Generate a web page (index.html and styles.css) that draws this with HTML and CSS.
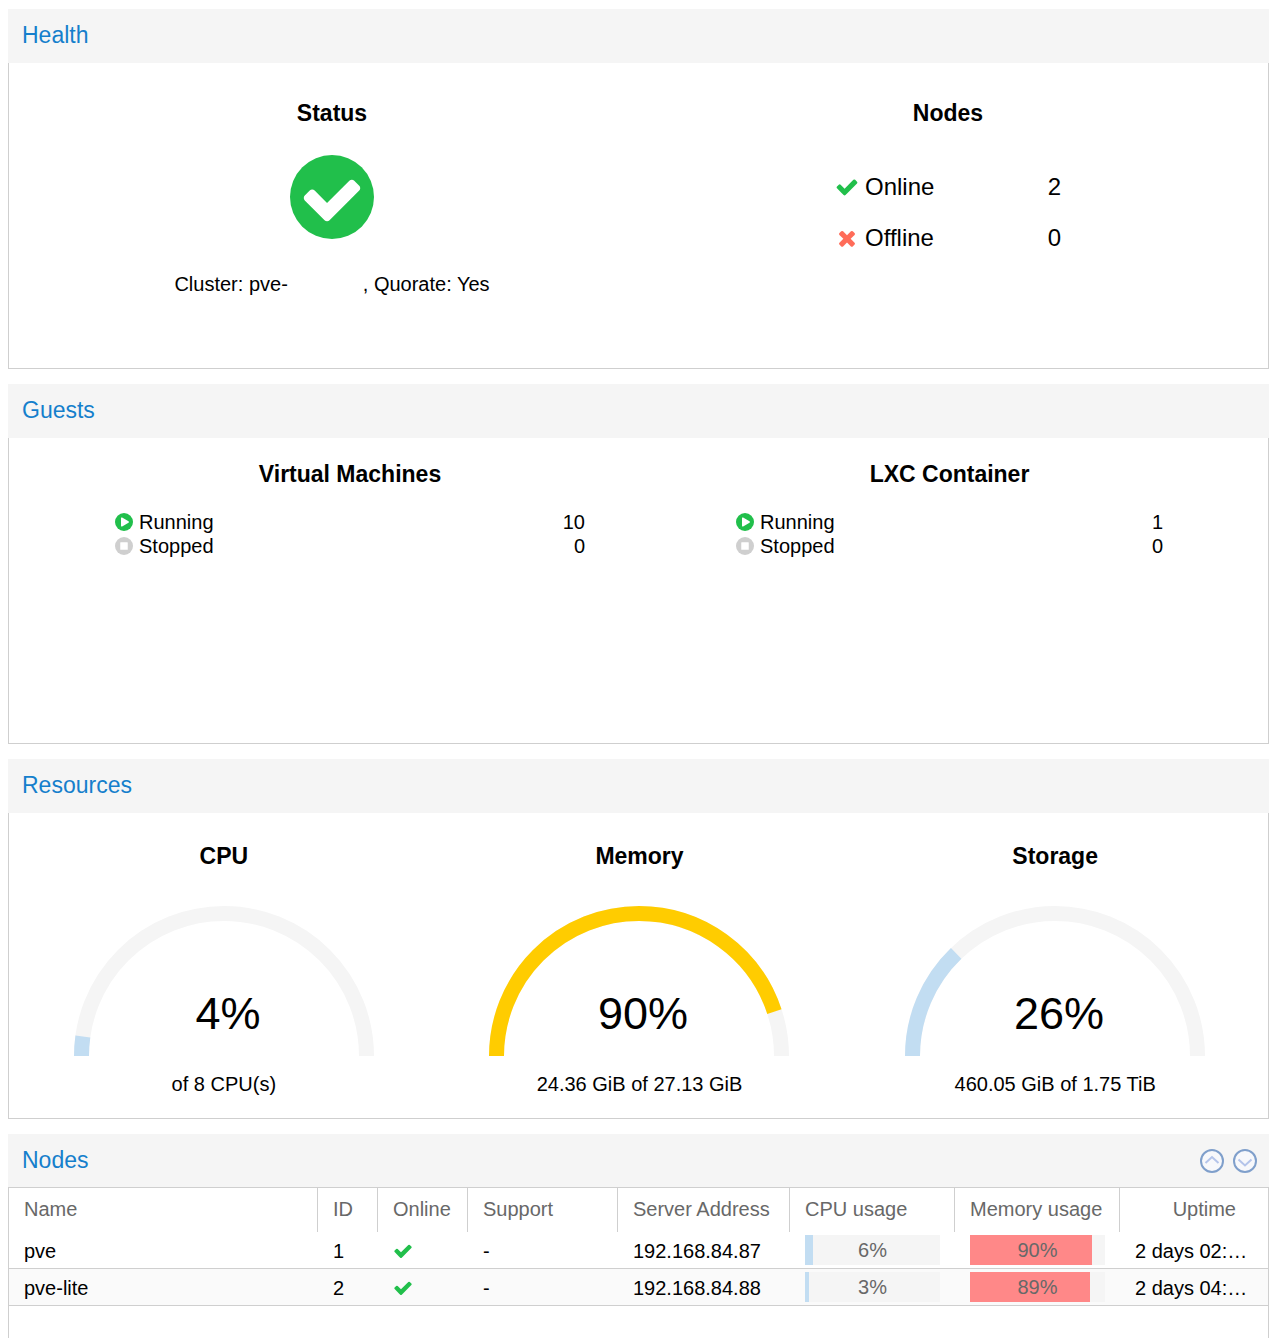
FILE: index.html
```html
<!DOCTYPE html>
<html lang="en">
<head>
<meta charset="utf-8">
<title>Datacenter Summary</title>
<link rel="stylesheet" href="styles.css">
</head>
<body>
<svg class="defs" aria-hidden="true">
  <symbol id="check" viewBox="0 0 1792 1792"><path d="M1671 566q0 40-28 68l-724 724-136 136q-28 28-68 28t-68-28l-136-136-362-362q-28-28-28-68t28-68l136-136q28-28 68-28t68 28l294 295 656-657q28-28 68-28t68 28l136 136q28 28 28 68z"/></symbol>
  <symbol id="times" viewBox="0 0 1792 1792"><path d="M1490 1322q0 40-28 68l-136 136q-28 28-68 28t-68-28l-294-294-294 294q-28 28-68 28t-68-28l-136-136q-28-28-28-68t28-68l294-294-294-294q-28-28-28-68t28-68l136-136q28-28 68-28t68 28l294 294 294-294q28-28 68-28t68 28l136 136q28 28 28 68t-28 68l-294 294 294 294q28 28 28 68z"/></symbol>
  <symbol id="check-circle" viewBox="128 128 1536 1536"><circle cx="896" cy="896" r="768"/><path fill="#fff" d="M1412 734q0-28-18-46l-91-90q-19-19-45-19t-45 19l-408 407-226-226q-19-19-45-19t-45 19l-91 90q-18 18-18 46 0 27 18 45l362 362q19 19 45 19 27 0 46-19l543-543q18-18 18-45z"/></symbol>
  <symbol id="play-circle" viewBox="128 128 1536 1536"><circle cx="896" cy="896" r="768"/><path fill="#fff" d="M1312 896q0 37-32 55l-544 320q-15 9-32 9-16 0-32-8-32-19-32-56v-640q0-37 32-56 33-18 64 1l544 320q32 18 32 55z"/></symbol>
  <symbol id="stop-circle" viewBox="128 128 1536 1536"><circle cx="896" cy="896" r="768"/><rect fill="#fff" x="576" y="576" width="640" height="640" rx="32"/></symbol>
</svg>

<section class="panel">
  <header class="panel-header"><h2>Health</h2></header>
  <div class="panel-body health">
    <div class="health-col">
      <h3>Status</h3>
      <svg class="status-icon good"><use href="#check-circle"/></svg>
      <p class="cluster">Cluster: pve-<span class="blank"></span>, Quorate: Yes</p>
    </div>
    <div class="health-col">
      <h3>Nodes</h3>
      <dl class="node-counts">
        <div><dt><svg class="icon-lg good"><use href="#check"/></svg>Online</dt><dd>2</dd></div>
        <div><dt><svg class="icon-lg bad"><use href="#times"/></svg>Offline</dt><dd>0</dd></div>
      </dl>
    </div>
  </div>
</section>

<section class="panel">
  <header class="panel-header"><h2>Guests</h2></header>
  <div class="panel-body guests">
    <div>
      <h3>Virtual Machines</h3>
      <dl class="guest-counts">
        <div><dt><svg class="icon-sm good"><use href="#play-circle"/></svg>Running</dt><dd>10</dd></div>
        <div><dt><svg class="icon-sm faded"><use href="#stop-circle"/></svg>Stopped</dt><dd>0</dd></div>
      </dl>
    </div>
    <div>
      <h3>LXC Container</h3>
      <dl class="guest-counts">
        <div><dt><svg class="icon-sm good"><use href="#play-circle"/></svg>Running</dt><dd>1</dd></div>
        <div><dt><svg class="icon-sm faded"><use href="#stop-circle"/></svg>Stopped</dt><dd>0</dd></div>
      </dl>
    </div>
  </div>
</section>

<section class="panel">
  <header class="panel-header"><h2>Resources</h2></header>
  <div class="panel-body resources">
    <div class="gauge">
      <h3>CPU</h3>
      <svg viewBox="0 0 300 150">
        <path class="track" d="M7.5 150A142.5 142.5 0 0 1 292.5 150"/>
        <path class="value" pathLength="100" stroke-dasharray="4.4 200" d="M7.5 150A142.5 142.5 0 0 1 292.5 150"/>
        <text x="154" y="123">4%</text>
      </svg>
      <p>of 8 CPU(s)</p>
    </div>
    <div class="gauge">
      <h3>Memory</h3>
      <svg viewBox="0 0 300 150">
        <path class="track" d="M7.5 150A142.5 142.5 0 0 1 292.5 150"/>
        <path class="value warning" pathLength="100" stroke-dasharray="89.9 200" d="M7.5 150A142.5 142.5 0 0 1 292.5 150"/>
        <text x="154" y="123">90%</text>
      </svg>
      <p>24.36 GiB of 27.13 GiB</p>
    </div>
    <div class="gauge">
      <h3>Storage</h3>
      <svg viewBox="0 0 300 150">
        <path class="track" d="M7.5 150A142.5 142.5 0 0 1 292.5 150"/>
        <path class="value" pathLength="100" stroke-dasharray="25.6 200" d="M7.5 150A142.5 142.5 0 0 1 292.5 150"/>
        <text x="154" y="123">26%</text>
      </svg>
      <p>460.05 GiB of 1.75 TiB</p>
    </div>
  </div>
</section>

<section class="panel panel-grid">
  <header class="panel-header">
    <h2>Nodes</h2>
    <div class="tools">
      <button type="button" aria-label="Move up"><svg viewBox="0 0 24 24"><circle cx="12" cy="12" r="11"/><path d="M5.500 14L12 8l6.500 6"/></svg></button>
      <button type="button" aria-label="Move down"><svg viewBox="0 0 24 24"><circle cx="12" cy="12" r="11"/><path d="M5.500 10.500L12 16.500l6.500-6"/></svg></button>
    </div>
  </header>
  <div class="panel-body">
    <table>
      <colgroup>
        <col><col class="w-id"><col class="w-online"><col class="w-support"><col class="w-address"><col class="w-usage"><col class="w-usage"><col class="w-uptime">
      </colgroup>
      <thead>
        <tr><th>Name</th><th>ID</th><th>Online</th><th>Support</th><th>Server Address</th><th>CPU usage</th><th>Memory usage</th><th class="uptime">Uptime</th></tr>
      </thead>
      <tbody>
        <tr>
          <td>pve</td><td>1</td><td><svg class="icon-md good"><use href="#check"/></svg></td><td>-</td><td>192.168.84.87</td>
          <td class="usage"><div class="bar"><span class="fill" style="width:6%"></span><span class="bar-text">6%</span></div></td>
          <td class="usage"><div class="bar critical"><span class="fill" style="width:90%"></span><span class="bar-text">90%</span></div></td>
          <td>2 days 02:…</td>
        </tr>
        <tr>
          <td>pve-lite</td><td>2</td><td><svg class="icon-md good"><use href="#check"/></svg></td><td>-</td><td>192.168.84.88</td>
          <td class="usage"><div class="bar"><span class="fill" style="width:3%"></span><span class="bar-text">3%</span></div></td>
          <td class="usage"><div class="bar critical"><span class="fill" style="width:89%"></span><span class="bar-text">89%</span></div></td>
          <td>2 days 04:…</td>
        </tr>
      </tbody>
    </table>
  </div>
</section>
</body>
</html>
```
FILE: styles.css
```css
* {
  box-sizing: border-box;
}

body {
  display: flex;
  flex-direction: column;
  gap: 15px;
  min-height: 100vh;
  margin: 0;
  padding: 9px 8px 0;
  background: #fff;
  color: #000;
  font: 20px/24px "Liberation Sans", Arial, sans-serif;
}

h2, h3, p, dl, dd {
  margin: 0;
}

.defs {
  position: absolute;
  width: 0;
  height: 0;
}

/* Panels */
.panel {
  display: flex;
  flex-direction: column;
  min-height: 360px;
}

.panel-header {
  display: flex;
  align-items: center;
  justify-content: space-between;
  height: 54px;
  padding: 0 12px 0 14px;
  background: #f5f5f5;
}

.panel-header h2 {
  padding-bottom: 2px;
  color: #157fcc;
  font-size: 23px;
  font-weight: normal;
  line-height: 28px;
}

.panel-body {
  flex: 1;
  border: 1px solid #cfcfcf;
  border-top: 0;
}

.panel-body h3 {
  font-size: 23px;
  line-height: 28px;
  text-align: center;
}

.good { fill: #21bf4b; }
.bad { fill: #ff6c59; }
.faded { fill: #cfcfcf; }

.icon-sm { width: 18px; height: 18px; }
.icon-md { display: block; width: 20px; height: 20px; }
.icon-lg { width: 24px; height: 24px; }

/* Health */
.health {
  display: grid;
  grid-template-columns: 1fr 1fr;
  padding: 36px 12px 0 15px;
}

.health-col {
  display: flex;
  flex-direction: column;
  align-items: center;
}

.status-icon {
  width: 84px;
  height: 84px;
  margin: 28px 0 33px;
}

.blank {
  display: inline-block;
  width: 75px;
}

.node-counts {
  width: 226px;
  margin-top: 34px;
  font-size: 24px;
  line-height: 51px;
}

.node-counts div,
.guest-counts div {
  display: flex;
  justify-content: space-between;
}

.node-counts dt,
.guest-counts dt {
  display: flex;
  align-items: center;
  gap: 6px;
}

/* Guests */
.guests {
  display: grid;
  grid-template-columns: 470fr 427fr;
  gap: 151px;
  padding: 22px 105px 0 106px;
}

.guest-counts {
  margin-top: 22px;
}

/* Resources */
.resources {
  display: grid;
  grid-template-columns: repeat(3, 1fr);
  padding: 29px 5px 0 7px;
}

.gauge {
  display: flex;
  flex-direction: column;
  align-items: center;
}

.gauge svg {
  width: 300px;
  height: 150px;
  margin: 36px 0 16px;
}

.gauge path {
  fill: none;
  stroke-width: 15px;
}

.gauge .track { stroke: #f5f5f5; }
.gauge .value { stroke: #c2ddf2; }
.gauge .warning { stroke: #fc0; }

.gauge text {
  font-size: 45px;
  text-anchor: middle;
}

/* Nodes grid */
.panel-grid {
  flex: 1;
  min-height: 204px;
}

.panel-grid .panel-header {
  height: 53px;
}

.panel-grid .panel-body {
  border-top: 1px solid #cfcfcf;
  border-bottom: 0;
}

.tools {
  display: flex;
  gap: 9px;
}

.tools button {
  width: 24px;
  height: 24px;
  padding: 0;
  border: 0;
  background: none;
}

.tools svg {
  display: block;
  fill: none;
  stroke: #b4c4ea;
  stroke-width: 2px;
}

.tools circle {
  fill: #f7f8fb;
  stroke: #7f9fcb;
}

table {
  width: 100%;
  border-collapse: separate;
  border-spacing: 0;
  table-layout: fixed;
}

.w-id { width: 60px; }
.w-online { width: 90px; }
.w-support { width: 150px; }
.w-address { width: 172px; }
.w-usage { width: 165px; }
.w-uptime { width: 148px; }

th {
  height: 44px;
  padding: 0 0 3px 15px;
  border-right: 1px solid #cfcfcf;
  color: #686868;
  font-weight: normal;
  text-align: left;
  white-space: nowrap;
}

th.uptime {
  padding-right: 32px;
  border-right: 0;
  text-align: right;
}

td {
  height: 37px;
  padding: 2px 15px 0;
  border-bottom: 1px solid #cfcfcf;
  white-space: nowrap;
}

td.usage {
  padding: 3px 15px;
}

td:last-child {
  padding-right: 0;
}

tbody tr:nth-child(even) {
  background: #fafafa;
}

.bar {
  display: grid;
  height: 30px;
  background: #f5f5f5;
  color: #686868;
  line-height: 30px;
  text-align: center;
}

.bar .fill,
.bar .bar-text {
  grid-area: 1 / 1;
}

.fill { background: #c2ddf2; }
.critical .fill { background: #f88; }
```
